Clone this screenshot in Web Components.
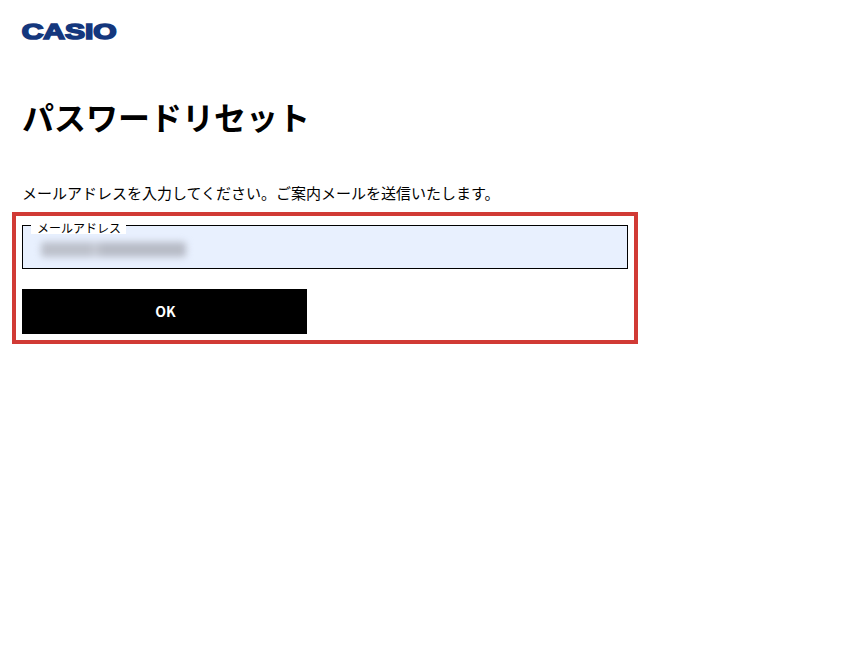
<!DOCTYPE html>
<html lang="ja">
<head>
<meta charset="utf-8">
<title>パスワードリセット</title>
<style>
html,body{margin:0;padding:0;background:#fff}
body{font-family:"Noto Sans CJK JP","Noto Sans",sans-serif;color:#000}
</style>
</head>
<body>
<reset-page>
  <casio-logo slot="logo"></casio-logo>
  <span slot="title">パスワードリセット</span>
  <span slot="lead">メールアドレスを入力してください。ご案内メールを送信いたします。</span>
  <reset-form>
    <email-field label="メールアドレス"></email-field>
    <ok-button>OK</ok-button>
  </reset-form>
</reset-page>
<script>
function def(name, html){
  customElements.define(name, class extends HTMLElement{
    constructor(){super();this.attachShadow({mode:'open'}).innerHTML=html;}
    connectedCallback(){
      const l=this.shadowRoot.querySelector('[data-label]');
      if(l) l.textContent=this.getAttribute('label')||'';
    }
  });
}
def('reset-page',`<style>
:host{display:block;width:845px;height:650px;box-sizing:border-box;padding:19px 0 0 12px;overflow:hidden}
.logo{display:block;margin-left:8px;height:26px}
h1{margin:51px 0 0 10px;font:700 32px/40px "Noto Sans CJK JP",sans-serif}
p{margin:46px 0 0 10px;font:400 15px/21px "Noto Sans CJK JP",sans-serif}
</style>
<div class="logo"><slot name="logo"></slot></div>
<h1><slot name="title"></slot></h1>
<p><slot name="lead"></slot></p>
<slot></slot>`);
def('casio-logo',`<style>:host{display:block;width:98px;height:26px}svg{display:block}</style>
<svg width="98" height="26" viewBox="0 0 98 26"><text x="1.7" y="20.4" textLength="95" lengthAdjust="spacingAndGlyphs" font-family="Liberation Sans" font-weight="700" font-size="22.5" fill="#14377d" stroke="#14377d" stroke-width="1.7">CASIO</text></svg>`);
def('reset-form',`<style>
:host{display:block;box-sizing:border-box;width:626px;height:132px;margin-top:9px;border:4px solid #d13a35;padding:9px 6px 0}
.stack{display:flex;flex-direction:column;gap:20px}
</style><div class="stack"><slot></slot></div>`);
def('email-field',`<style>
:host{display:block;position:relative;box-sizing:border-box;height:44px;border:1px solid #000;background:#e8f0fe}
.label{position:absolute;left:8px;top:-5px;background:#fff;padding:0 5px 0 6px;height:13px;font:400 12px/13px "Noto Sans CJK JP",sans-serif;color:#000;white-space:nowrap}
.value{margin:16px 0 0 18px;width:145px;height:15px;background:linear-gradient(90deg,#bcc0cb 0 34%,#c9cdd8 37%,#b7bbc6 42% 100%);filter:blur(3.5px);border-radius:3px}
</style><span class="label" data-label></span><div class="value"></div>`);
def('ok-button',`<style>
:host{display:flex;align-items:center;justify-content:center;box-sizing:border-box;width:285px;height:45px;padding:0 0 2px 2px;background:#000;color:#fff;font:700 14px/1 "Noto Sans CJK JP",sans-serif}
</style><slot></slot>`);
</script>
</body>
</html>
